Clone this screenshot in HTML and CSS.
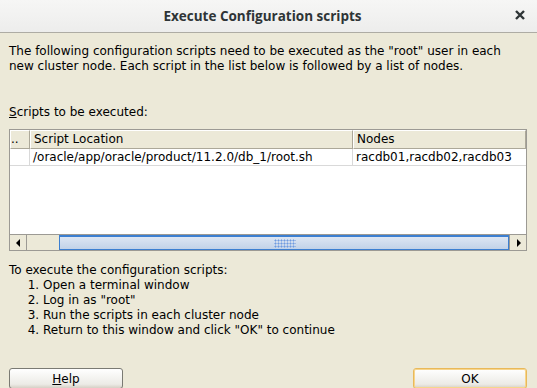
FILE: index.html
```html
<!DOCTYPE html>
<html lang="en">

<head>
	<meta charset="UTF-8">
	<title>Execute Configuration scripts</title>
	<link rel="stylesheet" href="styles.css">
</head>

<body>
	<div class="titlebar">
		<span class="title">Execute Configuration scripts</span>
		<svg class="close" width="10" height="10" viewBox="0 0 10 10">
			<path d="M1 1 L9 9 M9 1 L1 9" stroke="#2e3436" stroke-width="2.4" fill="none" />
		</svg>
	</div>
	<div class="content">
		<p class="intro">The following configuration scripts need to be executed as the "root" user in each<br>new cluster node. Each script in the list below is followed by a list of nodes.</p>
		<p class="label"><u>S</u>cripts to be executed:</p>
		<div class="table">
			<div class="row head">
				<div class="cell num">..</div>
				<div class="cell loc">Script Location</div>
				<div class="cell nodes">Nodes</div>
			</div>
			<div class="row">
				<div class="cell num"></div>
				<div class="cell loc">/oracle/app/oracle/product/11.2.0/db_1/root.sh</div>
				<div class="cell nodes">racdb01,racdb02,racdb03</div>
			</div>
			<div class="body-fill"></div>
			<div class="scrollbar">
				<div class="arrow left"></div>
				<div class="track">
					<div class="thumb"><span class="grip"></span></div>
				</div>
				<div class="arrow right"></div>
			</div>
		</div>
		<div class="steps">
			<p>To execute the configuration scripts:</p>
			<ol>
				<li>Open a terminal window</li>
				<li>Log in as "root"</li>
				<li>Run the scripts in each cluster node</li>
				<li>Return to this window and click "OK" to continue</li>
			</ol>
		</div>
		<div class="buttons">
			<button type="button" class="btn"><u>H</u>elp</button>
			<button type="button" class="btn default">OK</button>
		</div>
	</div>
</body>

</html>
```

FILE: styles.css
```css
*,
*::before,
*::after {
	box-sizing: border-box;
}

html,
body {
	margin: 0;
	height: 100%;
}

body {
	font-family: "DejaVu Sans", sans-serif;
	font-size: 12px;
	color: #000000;
	background-color: #ece9d8;
	overflow: hidden;
}

p {
	margin: 0;
}

.titlebar {
	display: flex;
	align-items: center;
	justify-content: center;
	height: 33px;
	background: linear-gradient(#f6f6f5, #ededec);
	border-bottom: 1px solid #aeaca4;
	position: relative;
	color: #2e3436;
}

.title {
	font-family: "Open Sans", sans-serif;
	font-weight: bold;
	font-size: 13.5px;
	padding-right: 12px;
}

.close {
	position: absolute;
	right: 12px;
	top: 10px;
}

.content {
	padding: 11px 10px 0 9px;
}

.intro {
	line-height: 15px;
}

.label {
	margin-top: 31px;
	line-height: 15px;
}

.table {
	margin-top: 9px;
	border: 1px solid #9c9a94;
	background-color: #ffffff;
	height: 122px;
	display: flex;
	flex-direction: column;
}

.row {
	display: flex;
	height: 17px;
	border-bottom: 1px solid #d9d9d9;
	line-height: 16px;
}

.row.head {
	height: 19px;
	line-height: 17px;
	background-color: #ece9d8;
	border-bottom: none;
}

.cell {
	padding-left: 3px;
	white-space: nowrap;
	overflow: hidden;
	border-right: 1px solid #d9d9d9;
}

.head .cell {
	border-top: 1px solid #ffffff;
	border-left: 1px solid #ffffff;
	border-right: 1px solid #aca899;
	border-bottom: 1px solid #aca899;
	padding-left: 3px;
}

.head .num {
	padding-left: 0;
}

.num {
	width: 20px;
}

.loc {
	width: 323px;
}

.nodes {
	flex: 1;
	border-right: none;
}

.body-fill {
	flex: 1;
}

.scrollbar {
	display: flex;
	height: 16px;
	background-color: #ece9d8;
	border-top: 1px solid #9c9a94;
}

.arrow {
	width: 17px;
	border-right: 1px solid #9c9a94;
	position: relative;
}

.arrow.right {
	border-right: none;
	border-left: 1px solid #9c9a94;
}

.arrow::after {
	content: '';
	position: absolute;
	top: 4px;
	left: 6px;
	border-top: 4px solid transparent;
	border-bottom: 4px solid transparent;
}

.arrow.left::after {
	border-right: 4px solid #000000;
}

.arrow.right::after {
	left: 7px;
	border-left: 4px solid #000000;
}

.track {
	flex: 1;
	padding-left: 32px;
	display: flex;
}

.thumb {
	flex: 1;
	border: 1px solid #3c7fd1;
	border-top-width: 2px;
	background: linear-gradient(#dde6f3, #c2d2e8);
	display: flex;
	align-items: center;
	justify-content: center;
}

.grip {
	width: 22px;
	height: 9px;
	margin-left: 2px;
	background-image: radial-gradient(#6f9be0 40%, transparent 55%);
	background-size: 3px 3px;
}

.steps {
	margin-top: 12px;
	line-height: 15px;
}

.steps ol {
	margin: 0;
	padding-left: 34px;
}

.buttons {
	display: flex;
	justify-content: space-between;
	margin-top: 30px;
}

.btn {
	font-family: "DejaVu Sans", sans-serif;
	font-size: 12px;
	width: 114px;
	height: 21px;
	padding: 0;
	border: 1px solid #7a7a73;
	border-radius: 3px;
	background: linear-gradient(#ffffff, #ecebe6 80%, #d6d0c5);
	color: #000000;
}

.btn.default {
	border-color: #e9b95a;
	box-shadow: inset 0 0 0 1px #f7d58c;
}
```
